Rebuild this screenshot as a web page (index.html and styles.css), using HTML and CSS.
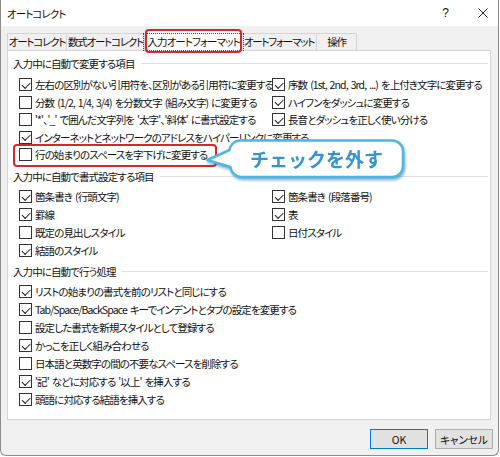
FILE: index.html
```html
<!DOCTYPE html>
<html lang="ja">
<head>
<meta charset="utf-8">
<title>オートコレクト</title>
<link rel="stylesheet" href="styles.css">
</head>
<body>
<div class="dialog">
  <div class="titlebar">
    <span class="title">オートコレクト</span>
    <span class="help">?</span>
    <svg class="close" width="10" height="10" viewBox="0 0 10 10"><path d="M0.5 0.5 L9.5 9.5 M9.5 0.5 L0.5 9.5" stroke="#222" stroke-width="1"/></svg>
  </div>
  <div class="tabs">
    <div class="tab t1">オートコレクト</div>
    <div class="tab t2">数式オートコレクト</div>
    <div class="tab t3 selected"><span class="focus">入力オートフォーマット</span></div>
    <div class="tab t4">オートフォーマット</div>
    <div class="tab t5">操作</div>
  </div>
  <div class="panel">
    <section class="group g1">
      <div class="group-title">入力中に自動で変更する項目</div>
      <div class="cols">
        <div class="col">
          <div class="row"><span class="cb on"></span>左右の区別がない引用符を、区別がある引用符に変更する</div>
          <div class="row"><span class="cb"></span>分数 (1/2, 1/4, 3/4) を分数文字 (組み文字) に変更する</div>
          <div class="row"><span class="cb"></span>'*'、'_' で囲んだ文字列を '太字'、'斜体' に書式設定する</div>
          <div class="row"><span class="cb on"></span>インターネットとネットワークのアドレスをハイパーリンクに変更する</div>
          <div class="row marked"><span class="cb"></span>行の始まりのスペースを字下げに変更する</div>
        </div>
        <div class="col">
          <div class="row"><span class="cb on"></span>序数 (1st, 2nd, 3rd, ...) を上付き文字に変更する</div>
          <div class="row"><span class="cb on"></span>ハイフンをダッシュに変更する</div>
          <div class="row"><span class="cb on"></span>長音とダッシュを正しく使い分ける</div>
        </div>
      </div>
    </section>
    <section class="group g2">
      <div class="group-title">入力中に自動で書式設定する項目</div>
      <div class="cols">
        <div class="col">
          <div class="row"><span class="cb on"></span>箇条書き (行頭文字)</div>
          <div class="row"><span class="cb on"></span>罫線</div>
          <div class="row"><span class="cb"></span>既定の見出しスタイル</div>
          <div class="row"><span class="cb on"></span>結語のスタイル</div>
        </div>
        <div class="col">
          <div class="row"><span class="cb on"></span>箇条書き (段落番号)</div>
          <div class="row"><span class="cb on"></span>表</div>
          <div class="row"><span class="cb"></span>日付スタイル</div>
        </div>
      </div>
    </section>
    <section class="group g3">
      <div class="group-title">入力中に自動で行う処理</div>
      <div class="col">
        <div class="row"><span class="cb on"></span>リストの始まりの書式を前のリストと同じにする</div>
        <div class="row"><span class="cb on"></span>Tab/Space/BackSpace キーでインデントとタブの設定を変更する</div>
        <div class="row"><span class="cb"></span>設定した書式を新規スタイルとして登録する</div>
        <div class="row"><span class="cb on"></span>かっこを正しく組み合わせる</div>
        <div class="row"><span class="cb"></span>日本語と英数字の間の不要なスペースを削除する</div>
        <div class="row"><span class="cb on"></span>'記' などに対応する '以上' を挿入する</div>
        <div class="row"><span class="cb on"></span>頭語に対応する結語を挿入する</div>
      </div>
    </section>
    <div class="callout">
      <svg width="205" height="45" viewBox="0 0 205 45">
        <path d="M35 2.5 H187 A11 11 0 0 1 198 13.5 V28 A11 11 0 0 1 187 39 H36 A11 11 0 0 1 25.5 29 L2.5 22 L24.5 12 A11 11 0 0 1 35 2.5 Z" fill="#fff" stroke="#4db6e2" stroke-width="2.5" stroke-linejoin="round"/>
      </svg>
      <span class="callout-text">チェックを外す</span>
    </div>
  </div>
  <div class="buttons">
    <div class="btn default">OK</div>
    <div class="btn">キャンセル</div>
  </div>
</div>
</body>
</html>
```
FILE: styles.css
```css
* { box-sizing: border-box; }
html, body { margin: 0; padding: 0; background: #fff; }
body {
  width: 500px;
  height: 457px;
  overflow: hidden;
  font-family: "Noto Sans CJK JP", "Noto Sans", sans-serif;
  font-size: 10.5px;
  letter-spacing: -0.9px;
  word-spacing: 1.5px;
  color: #111;
  font-feature-settings: "palt";
}
.dialog {
  width: 499px;
  height: 456px;
  border: 1px solid #8c8c8c;
  border-top: none;
  border-radius: 0 0 6px 6px;
  background: #f0f0f0;
  display: flex;
  flex-direction: column;
}
.titlebar {
  height: 26px;
  flex: none;
  background: #fff;
  display: flex;
  align-items: center;
  padding: 0 10px 0 6px;
}
.title { flex: 1; }
.help { font-size: 12px; margin-right: 29px; font-family: "Liberation Sans", sans-serif; letter-spacing: 0; }
.close { display: block; }

.tabs {
  height: 24px;
  flex: none;
  display: flex;
  align-items: flex-end;
  padding-left: 6px;
  position: relative;
  z-index: 2;
}
.tab {
  height: 17px;
  border: 1px solid #d4d4d4;
  border-bottom: none;
  border-left: none;
  background: #f0f0f0;
  display: flex;
  align-items: center;
  justify-content: center;
  line-height: 1;
  white-space: nowrap;
  letter-spacing: -1.2px;
}
.t1 { width: 60px; border-left: 1px solid #d4d4d4; }
.t2 { width: 78px; }
.t3 { width: 97px; }
.t4 { width: 75px; }
.t5 { width: 40px; }
.tab.selected {
  height: 21px;
  margin-bottom: -1px;
  background: #fff;
  border-left: 1px solid #d4d4d4;
  position: relative;
  padding-top: 1px;
  letter-spacing: -0.9px;
}
.tab.selected::after {
  content: "";
  position: absolute;
  left: -1px;
  right: -1px;
  top: -2px;
  bottom: -2px;
  border: 2px solid #d7262c;
  border-radius: 4px;
}
.focus {
  border: 1px dotted #444;
  padding: 2px 3px;
  line-height: 12px;
}

.panel {
  flex: none;
  height: 370px;
  margin: 0 7px 0 6px;
  background: #fff;
  border: 1px solid #d4d4d4;
  padding: 3px 2px 0 5px;
  position: relative;
}
.group-title {
  height: 18px;
  display: flex;
  align-items: center;
  white-space: nowrap;
}
.group-title::after {
  content: "";
  flex: 1;
  height: 1px;
  background: #e1e1e1;
  margin-left: 6px;
}
.g1 .group-title { margin-bottom: 4px; }
.g2 { margin-top: 4px; }
.g3 { margin-top: 3px; }
.g2 .group-title, .g3 .group-title { margin-bottom: 2px; }

.cols { display: flex; }
.col { display: flex; flex-direction: column; align-items: flex-start; padding-left: 6px; }
.cols .col:first-child { width: 259px; }
.cols .col + .col { padding-left: 0; }
.row {
  height: 18px;
  display: flex;
  align-items: center;
  white-space: nowrap;
  position: relative;
}
.g1 .row { height: 17.5px; }
.cb {
  width: 13px;
  height: 13px;
  border: 1px solid #333;
  background: #fff;
  margin-right: 3px;
  flex: none;
  position: relative;
}
.cb.on::after {
  content: "";
  position: absolute;
  left: 2px;
  top: 2.5px;
  width: 7px;
  height: 3.5px;
  border-left: 1.3px solid #222;
  border-bottom: 1.3px solid #222;
  transform: rotate(-45deg);
}
.row.marked::after {
  content: "";
  position: absolute;
  left: -6px;
  right: -10px;
  top: -2px;
  bottom: -3px;
  border: 2px solid #d7262c;
  border-radius: 4px;
}

.callout {
  position: absolute;
  left: 197px;
  top: 87px;
  width: 205px;
  height: 45px;
  filter: drop-shadow(1px 2px 1.5px rgba(20, 110, 170, 0.55));
}
.callout svg { position: absolute; left: 0; top: 0; }
.callout-text {
  position: absolute;
  left: 25px;
  top: 2px;
  width: 173px;
  height: 37px;
  display: flex;
  align-items: center;
  justify-content: center;
  font-size: 19px;
  font-weight: 700;
  letter-spacing: 0;
  color: #3194d6;
  font-feature-settings: normal;
}

.buttons {
  display: flex;
  justify-content: flex-end;
  gap: 7px;
  margin-top: 9px;
  padding-right: 5px;
}
.btn {
  width: 58px;
  height: 20px;
  border: 1px solid #adadad;
  background: #e1e1e1;
  display: flex;
  align-items: center;
  justify-content: center;
  letter-spacing: 0;
}
.btn.default { border-color: #0078d7; }
```
